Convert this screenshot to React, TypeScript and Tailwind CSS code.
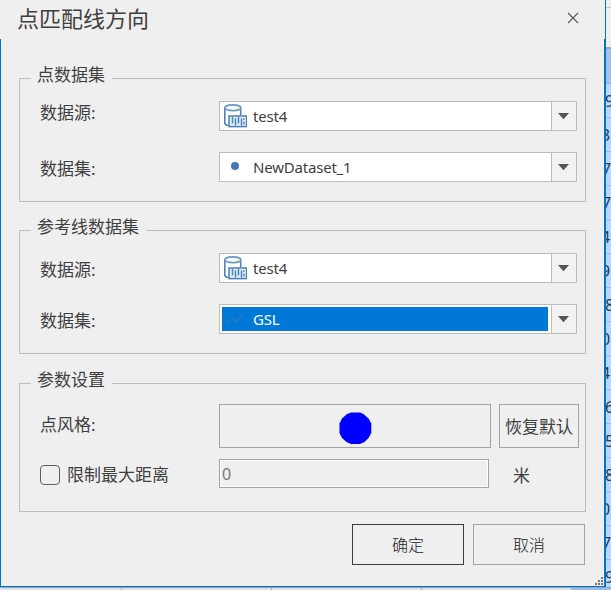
import type { ReactNode } from 'react';

const cells = [
  { value: '9', shift: '-ml-px' },
  { value: '3', shift: '-ml-[5px]' },
  { value: '7', shift: '-ml-[4px]' },
  { value: '7', shift: '-ml-[4px]' },
  { value: '4', shift: '-ml-[5px]' },
  { value: '9', shift: '-ml-[5px]' },
  { value: '8', shift: '-ml-[1px]' },
  { value: '0', shift: '-ml-[5px]' },
  { value: '4', shift: '-ml-[5px]' },
  { value: '6', shift: '-ml-[1px]' },
  { value: '5', shift: '-ml-[1px]' },
  { value: '8', shift: '-ml-[1px]' },
  { value: '0', shift: '-ml-[5px]' },
  { value: '7', shift: '-ml-[4px]' },
  { value: '9', shift: '-ml-[1px]' },
];

function DatabaseIcon() {
  return (
    <svg width="24" height="24" viewBox="0 0 24 24" fill="none" stroke="#4b82b8">
      <path d="M1.8 4V19.5q.7 1.8 3.5 2.2" strokeWidth="1.6" />
      <path d="M17.7 4V11" strokeWidth="1.6" />
      <ellipse cx="9.8" cy="3.8" rx="8" ry="2.9" strokeWidth="1.6" stroke="#6c99c5" fill="#f6f9fc" />
      <rect x="6" y="12" width="17.6" height="10.6" fill="#e6eef6" strokeWidth="1.5" />
      <path d="M9.5 13V19.5M12.5 14.5V21.5M15.5 13V19.5M18.5 14.5V21.5" strokeWidth="1.5" />
      <path d="M21 14.2v1.8M21 17.5v3" strokeWidth="1.3" />
    </svg>
  );
}

function PointIcon() {
  return (
    <svg width="24" height="24" viewBox="0 0 24 24">
      <circle cx="12" cy="11" r="4" fill="#4379b3" />
    </svg>
  );
}

function LineIcon() {
  return (
    <svg width="24" height="24" viewBox="0 0 24 24" fill="none" stroke="#2c78b8" strokeWidth="1.5">
      <path d="M3.8 13L5.8 15.5L10 11.5L12.2 14.8L21.5 6" />
    </svg>
  );
}

function Combo({ icon, text, selected }: { icon: ReactNode; text: string; selected?: boolean }) {
  return (
    <div className="flex h-[30px] w-[358px] border border-[#bdbdbd] bg-white">
      <div className="flex w-[331px] p-[2px]">
        <div
          className={
            selected
              ? 'flex h-6 w-[326px] items-center bg-[#0078d7] pl-[1px] text-white'
              : 'flex h-6 w-[326px] items-center pl-[1px]'
          }
        >
          {icon}
          <span className="ml-[6px] text-[15px] leading-6 tracking-[-0.2px]">{text}</span>
        </div>
      </div>
      <div className="flex flex-1 justify-center border-l border-[#bdbdbd] bg-[#f2f2f2] pt-[11px]">
        <svg className="-ml-px" width="11" height="7" viewBox="0 0 11 7">
          <path d="M0 0H11L5.5 6.3Z" fill="#555" />
        </svg>
      </div>
    </div>
  );
}

function Group({ title, className, children }: { title: string; className: string; children: ReactNode }) {
  return (
    <fieldset className={`ml-[18px] w-[567px] border border-[#bdbdbd] pl-[11px] ${className}`}>
      <legend className="h-6 pl-[6px] pr-[7px] text-[17px] leading-[18px]">{title}</legend>
      <div className="-ml-[11px] pl-5">{children}</div>
    </fieldset>
  );
}

function DatasetGroup(props: {
  title: string;
  className: string;
  firstLabel: string;
  secondLabel: string;
  datasetIcon: ReactNode;
  dataset: string;
  selected?: boolean;
}) {
  return (
    <Group title={props.title} className={props.className}>
      <div className="flex pt-[11px]">
        <div className="w-[179px] text-[17px] leading-6">
          <div className={props.firstLabel}>数据源:</div>
          <div className={props.secondLabel}>数据集:</div>
        </div>
        <div className="flex flex-col gap-[21px]">
          <Combo icon={<DatabaseIcon />} text="test4" />
          <Combo icon={props.datasetIcon} text={props.dataset} selected={props.selected} />
        </div>
      </div>
    </Group>
  );
}

export default function App() {
  return (
    <div className="flex h-[590px] w-[611px] flex-col overflow-hidden bg-[#efefef] font-['Noto_Sans','Noto_Sans_CJK_SC',sans-serif] text-[#3f3f3f]">
      <div className="flex h-[587px]">
        <div className="flex w-[606px] flex-col border-b border-[#0074cc]">
          <header className="flex h-[39px] justify-between border-r border-[#0074cc] pl-[17px] pr-[26px]">
            <h1 className="h-[39px] text-[22px] leading-[37px]">点匹配线方向</h1>
            <svg className="mt-[12px]" width="12" height="12" viewBox="0 0 12 12" stroke="#555" strokeWidth="1.1">
              <path d="M1 1L11 11M11 1L1 11" />
            </svg>
          </header>
          <main className="flex h-[547px] flex-col border-r-2 border-l border-[#0074cc]">
            <DatasetGroup
              title="点数据集"
              className="mt-[27px] h-[136px]"
              firstLabel="h-6"
              secondLabel="mt-[32px] h-6"
              datasetIcon={<PointIcon />}
              dataset="NewDataset_1"
            />
            <DatasetGroup
              title="参考线数据集"
              className="mt-[16px] h-[136px]"
              firstLabel="mt-[5px] h-6"
              secondLabel="mt-[27px] h-6"
              datasetIcon={<LineIcon />}
              dataset="GSL"
              selected
            />
            <Group title="参数设置" className="mt-[17px] h-[141px]">
              <div className="flex pt-[9px]">
                <div className="w-[179px] pt-[9px] text-[17px] leading-6">点风格:</div>
                <button className="flex h-11 w-[272px] justify-center border border-[#a3a3a3] pt-[7px]">
                  <svg width="33" height="33" viewBox="0 0 33 33">
                    <path d="M12 .5H21L24.5 2L29.5 6.5L32.3 11.5V21L29.5 26L25.5 30L21 32H12L7.5 30L3 26L.5 21V11.5L3 6.5L8 2Z" fill="#00f" />
                  </svg>
                </button>
                <button className="ml-2 h-11 w-20 whitespace-nowrap border border-[#a3a3a3] text-[17px] leading-[44px]">
                  恢复默认
                </button>
              </div>
              <div className="flex pt-[11px] text-[17px] leading-[30px]">
                <span className="mt-[6px] h-5 w-5 rounded-[4px] border border-[#606060]" />
                <span className="ml-[7px] w-[152px] pt-px">限制最大距离</span>
                <div className="h-[29px] w-[270px] border border-[#a3a3a3]">
                  <div className="h-[27px] border border-white pl-[1px] text-[16px] leading-[27px] text-[#777]">0</div>
                </div>
                <span className="ml-6 pt-[2px]">米</span>
              </div>
            </Group>
            <footer className="mt-[12px] flex gap-[9px] pl-[351px] font-['Noto_Sans_CJK_SC',sans-serif] text-[16px] text-[#222]">
              <button className="h-[41px] w-[112px] border border-[#3c3c3c] pb-[2px] font-light">确定</button>
              <button className="h-[41px] w-[112px] border border-[#a3a3a3] pb-[2px] font-light">取消</button>
            </footer>
            <div className="mt-auto flex justify-end">
              <svg width="9" height="9" viewBox="0 0 9 9" fill="#777">
                <path d="M6 0h2v2h-2zM3 3h2v2h-2zM6 3h2v2h-2zM0 6h2v2h-2zM3 6h2v2h-2zM6 6h2v2h-2z" />
              </svg>
            </div>
          </main>
        </div>
        <aside className="w-[5px] overflow-hidden text-[16px] text-[#303846]">
          <div className="h-2 border-b border-[#c8c8c8] bg-[#eeeeee]" />
          <div className="h-[41px] border-b-2 border-[#aaa5a5] bg-[#f0f0f0]" />
          <div className="h-[35px] border-b border-[#94b1d5] bg-[#a5c3e8]" />
          {cells.map((cell, i) => (
            <div key={i} className="h-[34px] overflow-hidden border-b border-[#9dbce0] bg-[#b9d7fb] leading-[34px]">
              <div className={cell.shift}>{cell.value}</div>
            </div>
          ))}
        </aside>
      </div>
      <div className="flex h-[3px] border-t border-[#8fa5b8] bg-[#e0e0e0]">
        <div className="w-[122px] border-r border-[#aaa]" />
        <div className="w-[150px] border-r border-[#aaa]" />
        <div className="w-[150px] border-r border-[#aaa]" />
        <div className="w-[149px]" />
        <div className="flex-1 bg-[#9dbce0]" />
      </div>
    </div>
  );
}
